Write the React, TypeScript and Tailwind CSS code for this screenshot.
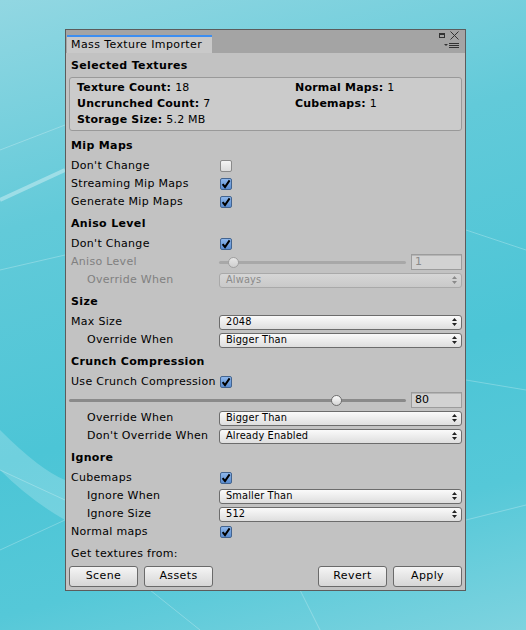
import React from "react";
import clsx from "clsx";

const Check = ({ on }: { on: boolean }) => (
  <div
    className={clsx(
      "ml-[1px] flex h-[12px] w-[12px] items-center justify-center rounded-[2px] border",
      on
        ? "border-[#43648f] bg-[linear-gradient(180deg,#8db6ea_0%,#5a8cd0_100%)]"
        : "border-[#8a8a8a] bg-[linear-gradient(180deg,#f4f4f4_0%,#dcdcdc_100%)]"
    )}
  >
    {on && (
      <svg width="10" height="10" viewBox="0 0 10 10">
        <path d="M1.6 5.2 L4 8 L8.6 1.4" fill="none" stroke="#000" strokeWidth="2" />
      </svg>
    )}
  </div>
);

const Arrows = ({ dim }: { dim?: boolean }) => (
  <svg width="5" height="8" viewBox="0 0 5 8" className="shrink-0">
    <path d="M2.5 0 L5 3 L0 3 Z M2.5 8 L5 5 L0 5 Z" fill={dim ? "#8a8a8a" : "#222"} />
  </svg>
);

const Dropdown = ({ value, dim }: { value: string; dim?: boolean }) => (
  <div
    className={clsx(
      "flex h-[15px] flex-1 items-center justify-between rounded-[3px] border pl-[6px] pr-[4px] text-[9.8px] tracking-[0.15px]",
      dim
        ? "border-[#a9a9a9] bg-[linear-gradient(180deg,#d6d6d6_0%,#c9c9c9_100%)] text-[#8a8a8a]"
        : "border-[#6c6c6c] bg-[linear-gradient(180deg,#fafafa_0%,#dedede_100%)] text-black"
    )}
  >
    <span className="leading-none">{value}</span>
    <Arrows dim={dim} />
  </div>
);

const Field = ({ value, dim }: { value: string; dim?: boolean }) => (
  <div
    className={clsx(
      "ml-[5px] flex h-[16px] w-[51px] shrink-0 items-center border border-[#9c9c9c] bg-[#d2d2d2] pl-[3px] shadow-[inset_0_1px_0_#b5b5b5]",
      dim ? "text-[#8a8a8a]" : "text-black"
    )}
  >
    {value}
  </div>
);

const Slider = ({ thumb, dim }: { thumb: string; dim?: boolean }) => (
  <div className="relative flex h-[16px] flex-1 items-center">
    <div
      className={clsx(
        "h-[3px] w-full rounded-full",
        dim ? "bg-[#a8a8a8]" : "bg-[#8a8a8a]"
      )}
    />
    <div
      className={clsx(
        "absolute top-[3px] h-[11px] w-[11px] rounded-full border",
        thumb,
        dim
          ? "border-[#a0a0a0] bg-[linear-gradient(180deg,#e6e6e6_0%,#cfcfcf_100%)]"
          : "border-[#6f6f6f] bg-[linear-gradient(180deg,#fbfbfb_0%,#d4d4d4_100%)]"
      )}
    />
  </div>
);

const Header = ({ children, top = "mt-[4px]" }: { children: React.ReactNode; top?: string }) => (
  <div className={clsx("mb-[2px] flex h-[18px] items-center pl-[2px] font-bold tracking-[0.35px]", top)}>
    {children}
  </div>
);

const Row = ({
  label,
  indent,
  dim,
  children,
}: {
  label: string;
  indent?: boolean;
  dim?: boolean;
  children?: React.ReactNode;
}) => (
  <div className="flex h-[18px] items-center">
    <div
      className={clsx(
        "w-[150px] shrink-0 whitespace-nowrap pl-[2px] tracking-[0.3px]",
        indent && "pl-[18px]",
        dim ? "text-[#808080]" : "text-black"
      )}
    >
      {label}
    </div>
    <div className="flex flex-1 items-center">{children}</div>
  </div>
);

const Button = ({ label }: { label: string }) => (
  <div className="flex h-[21px] w-[69px] items-center justify-center rounded-[3px] border border-[#6a6a6a] bg-[linear-gradient(180deg,#f5f5f5_0%,#d6d6d6_100%)] tracking-[0.4px]">
    {label}
  </div>
);

const Stat = ({ k, v }: { k: string; v: string }) => (
  <div className="flex h-[16px] items-center whitespace-nowrap">
    <span className="font-bold">{k}</span>
    <span className="ml-[4px]">{v}</span>
  </div>
);

export default function App() {
  return (
    <div className="relative h-[630px] w-[526px] overflow-hidden bg-[linear-gradient(165deg,#92d7e2_0%,#62cad9_30%,#4cc5d6_60%,#55c8d8_80%,#7ed3df_100%)] pl-[65px] pt-[29px] font-['DejaVu_Sans',sans-serif] text-[11px] text-black">
      <svg className="pointer-events-none absolute inset-0" width="526" height="630">
        <g stroke="#ffffff" strokeOpacity="0.25" strokeWidth="1" fill="none">
          <path d="M0 150 L65 125" />
          <path d="M0 200 L65 170" strokeWidth="4" strokeOpacity="0.35" />
          <path d="M0 270 L65 255" />
          <path d="M0 470 L65 500" />
          <path d="M0 550 L65 520" />
          <path d="M466 230 L526 250" />
          <path d="M466 380 L526 390" />
          <path d="M466 520 L526 505" />
          <path d="M150 590 L200 630" />
          <path d="M300 590 L320 630" />
        </g>
        <path d="M0 430 Q40 470 65 480 L65 520 Q30 500 0 470 Z" fill="#ffffff" fillOpacity="0.2" />
      </svg>
      <div className="relative flex h-[562px] w-[401px] flex-col border border-[#5c5c5c] bg-[#c2c2c2]">
        <div className="flex h-[23px] shrink-0 items-end justify-between bg-[#a4a4a4] pl-[1px]">
          <div className="flex h-[18px] w-[145px] items-center border-t-2 border-[#3d8ef0] bg-[#c9c9c9] pl-[4px] tracking-[0.4px]">
            Mass Texture Importer
          </div>
          <div className="relative mr-[4px] h-full w-[24px]">
            <div className="absolute left-[2px] top-[3px] h-[5px] w-[6px] border border-t-2 border-[#333]" />
            <svg className="absolute left-[13px] top-[1px]" width="9" height="9" viewBox="0 0 9 9">
              <path d="M0.5 0.5 L8.5 8.5 M8.5 0.5 L0.5 8.5" stroke="#333" strokeWidth="1" />
            </svg>
            <svg className="absolute left-[7px] top-[13px]" width="15" height="6" viewBox="0 0 15 6">
              <path d="M0 1 L4 1 L2 3 Z" fill="#333" />
              <path d="M5 0.5 H15 M5 2.5 H15 M5 4.5 H15" stroke="#333" strokeWidth="1" />
            </svg>
          </div>
        </div>

        <div className="flex flex-col px-[3px] pt-[4px]">
          <Header top="mt-0">Selected Textures</Header>
          <div className="grid grid-cols-[218px_1fr] rounded-[3px] border border-[#999] bg-[#cbcbcb] pb-[2px] pl-[7px] pt-[2px] tracking-[0.2px]">
            <Stat k="Texture Count:" v="18" />
            <Stat k="Normal Maps:" v="1" />
            <Stat k="Uncrunched Count:" v="7" />
            <Stat k="Cubemaps:" v="1" />
            <Stat k="Storage Size:" v="5.2 MB" />
          </div>

          <Header top="mt-[6px]">Mip Maps</Header>
          <Row label="Don't Change">
            <Check on={false} />
          </Row>
          <Row label="Streaming Mip Maps">
            <Check on />
          </Row>
          <Row label="Generate Mip Maps">
            <Check on />
          </Row>

          <Header>Aniso Level</Header>
          <Row label="Don't Change">
            <Check on />
          </Row>
          <Row label="Aniso Level" dim>
            <Slider thumb="left-[9px]" dim />
            <Field value="1" dim />
          </Row>
          <Row label="Override When" indent dim>
            <Dropdown value="Always" dim />
          </Row>

          <Header>Size</Header>
          <Row label="Max Size">
            <Dropdown value="2048" />
          </Row>
          <Row label="Override When" indent>
            <Dropdown value="Bigger Than" />
          </Row>

          <Header>Crunch Compression</Header>
          <Row label="Use Crunch Compression">
            <Check on />
          </Row>
          <div className="flex h-[18px] items-center">
            <Slider thumb="left-[262px]" />
            <Field value="80" />
          </div>
          <Row label="Override When" indent>
            <Dropdown value="Bigger Than" />
          </Row>
          <Row label="Don't Override When" indent>
            <Dropdown value="Already Enabled" />
          </Row>

          <Header>Ignore</Header>
          <Row label="Cubemaps">
            <Check on />
          </Row>
          <Row label="Ignore When" indent>
            <Dropdown value="Smaller Than" />
          </Row>
          <Row label="Ignore Size" indent>
            <Dropdown value="512" />
          </Row>
          <Row label="Normal maps">
            <Check on />
          </Row>

          <div className="mt-[4px] flex h-[18px] items-center pl-[2px] tracking-[0.3px]">Get textures from:</div>
          <div className="mt-[3px] flex items-center">
            <div className="flex gap-[6px]">
              <Button label="Scene" />
              <Button label="Assets" />
            </div>
            <div className="ml-auto flex gap-[6px]">
              <Button label="Revert" />
              <Button label="Apply" />
            </div>
          </div>
        </div>
      </div>
    </div>
  );
}
